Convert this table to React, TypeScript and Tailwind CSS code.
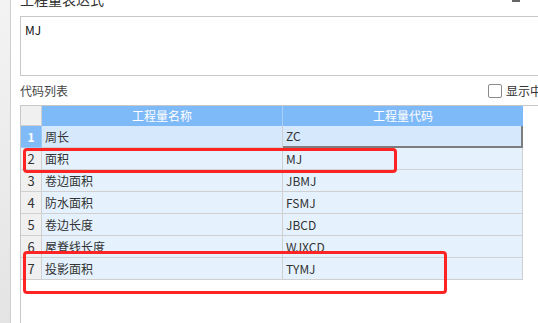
import React from 'react';

const rows = [
  { name: '周长', code: 'ZC' },
  { name: '面积', code: 'MJ' },
  { name: '卷边面积', code: 'JBMJ' },
  { name: '防水面积', code: 'FSMJ' },
  { name: '卷边长度', code: 'JBCD' },
  { name: '屋脊线长度', code: 'WJXCD' },
  { name: '投影面积', code: 'TYMJ' },
];

export default function App() {
  return (
    <div
      className="relative flex h-[323px] w-[538px] overflow-hidden bg-white text-[12px] text-[#333]"
      style={{ fontFamily: '"Noto Sans CJK SC", "Noto Sans", sans-serif' }}
    >
      {/* left splitter strip */}
      <div className="w-[11px] shrink-0 border-r border-[#cfcfcf] bg-gradient-to-b from-[#f3f3f3] to-[#e4e4e4]" />

      <div className="flex w-[560px] shrink-0 flex-col pl-[9px]">
        <div className="-mt-[11px] h-[20px] text-[14px] leading-[20px] text-[#333]">工程量表达式</div>
        <div className="mt-[7px] h-[60px] w-[540px] border border-[#c8c8c8] px-[4px] pt-[5px] leading-[16px] text-[#111]">
          MJ
        </div>

        <div className="flex h-[29px] w-[534px] items-center">
          <span className="text-[#444]">代码列表</span>
          <div className="ml-auto flex items-center gap-[4px]">
            <span className="h-[14px] w-[14px] rounded-[2px] border border-[#8a8a8a] bg-white" />
            <span className="text-[#333] whitespace-nowrap">显示中文</span>
          </div>
        </div>

        <div className="flex-1 border-l border-t border-[#c8c8c8] pt-0">
          <div className="w-[502px]">
            {/* header */}
            <div className="flex h-[20px]">
              <div className="w-[21px] border-r border-b border-[#d0d0d0] bg-[#f0f0f0]" />
              <div className="flex w-[241px] items-center justify-center border-r border-[#a9cffa] bg-[#7fbaf8] text-white">
                工程量名称
              </div>
              <div className="flex w-[240px] items-center justify-center bg-[#7fbaf8] text-white">
                工程量代码
              </div>
            </div>
            {rows.map((r, i) => {
              const sel = i === 0;
              return (
                <div key={r.code} className="flex h-[22px]">
                  <div
                    className={
                      sel
                        ? 'flex w-[21px] items-center justify-center border-b border-r border-[#9ccaf8] bg-[#80bbf8] font-bold text-white'
                        : 'flex w-[21px] items-center justify-center border-b border-r border-[#d0d0d0] bg-[#f0f0f0] text-[13px] text-[#333]'
                    }
                  >
                    {i + 1}
                  </div>
                  <div
                    className={
                      sel
                        ? 'flex w-[241px] items-center border-b border-r border-[#d0d0d0] bg-[#d6e9fc] pl-[3px]'
                        : 'flex w-[241px] items-center border-b border-r border-[#d0d0d0] bg-[#e5f2fe] pl-[3px]'
                    }
                  >
                    {r.name}
                  </div>
                  <div
                    className={
                      sel
                        ? 'flex w-[240px] items-center border-b-2 border-r-2 border-[#7d7d7d] bg-[#d6e9fc] pl-[3px]'
                        : 'flex w-[240px] items-center border-b border-r border-[#d0d0d0] bg-[#e5f2fe] pl-[3px]'
                    }
                  >
                    {r.code}
                  </div>
                </div>
              );
            })}
          </div>
        </div>
      </div>

      {/* top-right glyph fragment */}
      <div className="absolute left-[512px] top-0 h-[2px] w-[8px] bg-[#666]" />

      {/* red annotation boxes */}
      <div className="absolute left-[23px] top-[148px] h-[25px] w-[374px] rounded-[4px] border-[3px] border-[#ff2424]" />
      <div className="absolute left-[23px] top-[251px] h-[43px] w-[424px] rounded-[4px] border-[3px] border-[#ff2424]" />
    </div>
  );
}
